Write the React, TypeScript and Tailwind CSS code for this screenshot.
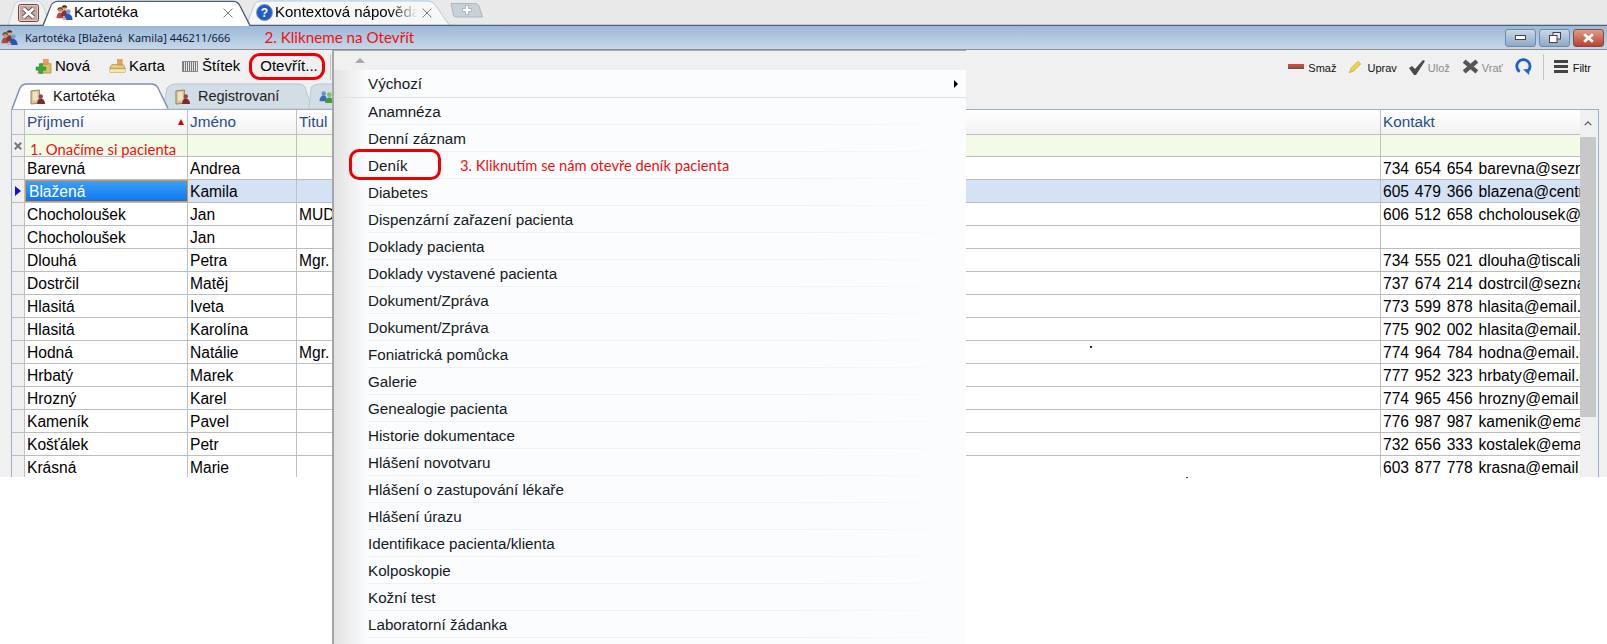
import React from 'react';

const rows = [
  ['Barevná', 'Andrea', '', '734 654 654 barevna@seznam.cz'],
  ['Blažená', 'Kamila', '', '605 479 366 blazena@centrum.cz'],
  ['Chocholoušek', 'Jan', 'MUDr.', '606 512 658 chcholousek@email.cz'],
  ['Chocholoušek', 'Jan', '', ''],
  ['Dlouhá', 'Petra', 'Mgr.', '734 555 021 dlouha@tiscali.cz'],
  ['Dostrčil', 'Matěj', '', '737 674 214 dostrcil@seznam.cz'],
  ['Hlasitá', 'Iveta', '', '773 599 878 hlasita@email.cz'],
  ['Hlasitá', 'Karolína', '', '775 902 002 hlasita@email.cz'],
  ['Hodná', 'Natálie', 'Mgr.', '774 964 784 hodna@email.cz'],
  ['Hrbatý', 'Marek', '', '777 952 323 hrbaty@email.cz'],
  ['Hrozný', 'Karel', '', '774 965 456 hrozny@email.cz'],
  ['Kameník', 'Pavel', '', '776 987 987 kamenik@email.cz'],
  ['Košťálek', 'Petr', '', '732 656 333 kostalek@email.cz'],
  ['Krásná', 'Marie', '', '603 877 778 krasna@email.cz'],
];

const menuItems = [
  'Anamnéza',
  'Denní záznam',
  'Deník',
  'Diabetes',
  'Dispenzární zařazení pacienta',
  'Doklady pacienta',
  'Doklady vystavené pacienta',
  'Dokument/Zpráva',
  'Dokument/Zpráva',
  'Foniatrická pomůcka',
  'Galerie',
  'Genealogie pacienta',
  'Historie dokumentace',
  'Hlášení novotvaru',
  'Hlášení o zastupování lékaře',
  'Hlášení úrazu',
  'Identifikace pacienta/klienta',
  'Kolposkopie',
  'Kožní test',
  'Laboratorní žádanka',
];

const People = ({ className }: { className?: string }) => (
  <svg viewBox="0 0 18 18" className={className}>
    <circle cx="4.500" cy="6" r="2.500" fill="#c98a5e" />
    <path d="M4.500 3.500c-2 0-3 1-3 3l1 0c0-1 1-1.500 2-1.500s2 .5 2 1.500h1c0-2-1-3-3-3z" fill="#6b3a24" />
    <path d="M0.500 15c0-4 1.500-6 4-6s3.500 2 3.500 6z" fill="#b04a42" />
    <circle cx="9" cy="3.800" r="2.500" fill="#d8a077" />
    <path d="M9 1.200c-2 0-3 1-3 2.500h6c0-1.500-1-2.500-3-2.500z" fill="#4a3020" />
    <path d="M5.500 13c0-4 1.200-6.500 3.500-6.500s3.500 2.500 3.500 6.500z" fill="#7a3a3a" />
    <circle cx="13" cy="8" r="2.500" fill="#7a9ad0" />
    <path d="M8.500 17c0-4 1.800-6.500 4.500-6.500s4.500 2.500 4.500 6.500z" fill="#2358b8" />
    <path d="M7 17c0-2 1-3 2-3s2 1 2 3z" fill="#e6a0b0" />
  </svg>
);

const TeamIcon = () => (
  <svg viewBox="0 0 16 16" className="relative w-[15px] h-[15px] mt-[6px]">
    <circle cx="5" cy="5" r="2.500" fill="#6f95c8" />
    <path d="M0.500 13c0-4 2-6 4.500-6s3.500 2 3.500 6z" fill="#3c6cb4" />
    <circle cx="11" cy="6" r="2.500" fill="#7fbf6a" />
    <path d="M6.500 15c0-4 2-6 4.500-6s4.500 2 4.500 6z" fill="#3f9a3a" />
  </svg>
);

const BookPerson = () => (
  <svg viewBox="0 0 17 17" className="w-[16px] h-[16px] shrink-0">
    <path d="M1 2l9-1v14l-9 1z" fill="#d8c59a" stroke="#7e6c4c" strokeWidth="0.800" />
    <path d="M3 3.500l5-.5v9l-5 .5z" fill="#efe2bd" />
    <circle cx="11.500" cy="8" r="2.300" fill="#8a4a48" />
    <path d="M7.500 16c0-3.500 1.500-6 4-6s4.500 2.500 4.500 6z" fill="#7c2c30" />
  </svg>
);

const NewIcon = () => (
  <svg viewBox="0 0 18 16" className="w-[17px] h-[15px] shrink-0">
    <path d="M6 5h11v10H3z" fill="#d8c06a" stroke="#96803a" strokeWidth="0.700" />
    <rect x="9" y="0.500" width="5" height="5" fill="#ef9a58" stroke="#c9803e" strokeWidth="0.500" />
    <path d="M4.500 5h3.500v3.500h3.500V12H8v3.500H4.500V12H1V8.500h3.500z" fill="#38a838" stroke="#1f7f2a" strokeWidth="0.500" />
  </svg>
);

const CardIcon = () => (
  <svg viewBox="0 0 18 16" className="w-[17px] h-[15px] shrink-0">
    <path d="M3 6h12l2 3v5H1V9z" fill="#e6d285" stroke="#96803a" strokeWidth="0.700" />
    <rect x="9" y="0.500" width="5" height="6" fill="#ef9a58" stroke="#c9803e" strokeWidth="0.500" />
    <path d="M1 10h16" stroke="#96803a" strokeWidth="0.700" />
    <path d="M1 11h16v3H1z" fill="#f3e6a8" />
  </svg>
);

const RedBox = () => (
  <svg viewBox="0 0 21 18" className="w-[21px] h-[18px] shrink-0">
    <rect x="0.500" y="0.500" width="20" height="17" rx="2" fill="#bda8a4" stroke="#8a3a36" />
    <rect x="1.500" y="1.500" width="18" height="15" rx="1" fill="none" stroke="#e6d8d6" strokeWidth="0.800" />
    <path d="M5.500 4.500l10 9M15.500 4.500l-10 9" stroke="#6e4a48" strokeWidth="4.500" />
    <path d="M5.500 4.500l10 9M15.500 4.500l-10 9" stroke="#fff" strokeWidth="3" />
  </svg>
);

const TabClose = () => (
  <svg viewBox="0 0 10 10" className="w-[10px] h-[10px] shrink-0">
    <path d="M0.500 0.500l9 9M9.500 0.500l-9 9" stroke="#808080" strokeWidth="1" fill="none" />
  </svg>
);

const ToolText = ({ children, gray }: { children: React.ReactNode; gray?: boolean }) => (
  <span className={`text-[11px] ${gray ? 'text-[#8a8a8a]' : 'text-[#111]'}`}>{children}</span>
);

const WindowButton = ({ children, close }: { children: React.ReactNode; close?: boolean }) => (
  <span
    className={`flex items-center justify-center w-[31px] h-[18px] rounded-[3px] border ${
      close ? 'border-[#8a4a44] bg-gradient-to-b from-[#e09a88] to-[#b8402e]' : 'border-[#6e8aa8] bg-gradient-to-b from-[#c8d8ea] to-[#8fa9c6]'
    }`}
  >
    {children}
  </span>
);

export default function App() {
  return (
    <div className="relative w-[1607px] h-[644px] overflow-hidden bg-white font-['Liberation_Sans',Arial,sans-serif]">
      {/* browser tab strip */}
      <div className="relative flex h-[26px] bg-[#e9e9e9]">
        <svg width="1607" height="26" className="absolute left-0 top-0">
          <path d="M8 26L14 6Q16 1 22 1H36Q41 1 44 8L50 26z" fill="#f1f1f1" stroke="#c5d3e2" />
          <path d="M451 3.500H475Q478 3.500 479 6L482.500 17H456Q454 17 453.500 15z" fill="#c8d0d8" stroke="#a9b6c4" />
          <path d="M246 26L254 6Q256 1 261 1H428Q433 1 436 6L450 26z" fill="#f7f7f7" stroke="#b6c9dc" />
          <path d="M0 25.500H43L51 6Q53 1.500 58 1.500H233Q238 1.500 240 6L250 25.500H1607" fill="none" stroke="#4e6178" strokeWidth="1.500" />
          <path d="M44 26L51.500 6Q53.500 2 58 2H233Q237 2 239 6L249 26z" fill="#fff" />
        </svg>
        <div className="relative flex items-center h-[25px] pl-[18px]">
          <RedBox />
        </div>
        <div className="relative flex items-center h-[25px] w-[204px] pl-[17px]">
          <People className="w-[17px] h-[17px] shrink-0" />
          <span className="ml-[1px] text-[15px] text-black">Kartotéka</span>
          <span className="ml-[85px]"><TabClose /></span>
        </div>
        <div className="relative flex items-center h-[25px] pl-[13px]">
          <span className="flex items-center justify-center w-[17px] h-[17px] shrink-0 rounded-full border border-[#8a9ab0] bg-[#1f5cc8] text-white text-[12px] font-bold">?</span>
          <span className="ml-[2px] w-[143px] overflow-hidden whitespace-nowrap text-[15px] text-black [mask-image:linear-gradient(90deg,#000_80%,transparent_100%)]">Kontextová nápověda</span>
          <span className="ml-[4px]"><TabClose /></span>
        </div>
        <svg viewBox="0 0 10 10" className="absolute left-[462px] top-[5px] w-[10px] h-[10px]">
          <path d="M3.500 0.500h3v3h3v3h-3v3h-3v-3h-3v-3h3z" fill="#fff" stroke="#8b97a4" strokeWidth="0.600" />
        </svg>
      </div>

      {/* window title */}
      <div className="flex items-center justify-between h-[24px] pr-[3px] bg-gradient-to-b from-[#9cb8d8] to-[#c6d8ea] border-b border-[#8f8f8f]">
        <div className="flex items-center">
          <People className="w-[17px] h-[17px] ml-[1px]" />
          <span className="ml-[7px] mt-[1px] text-[11px] text-[#10203a] font-['Noto_Sans',sans-serif] whitespace-nowrap">Kartotéka [Blažená&nbsp; Kamila] 446211/666</span>
          <span className="ml-[34px] text-[15.200px] text-[#f01010] font-['Lato',sans-serif] whitespace-nowrap">2. Klikneme na Otevřít</span>
        </div>
        <div className="flex items-center gap-[3px]">
          <WindowButton>
            <span className="w-[11px] h-[5px] border border-[#444] bg-white" />
          </WindowButton>
          <WindowButton>
            <svg viewBox="0 0 12 11" className="w-[12px] h-[11px]">
              <rect x="4" y="0.500" width="7.500" height="6.500" fill="#dfe8f2" stroke="#444" />
              <rect x="0.500" y="3.500" width="7.500" height="7" fill="#fff" stroke="#444" />
            </svg>
          </WindowButton>
          <WindowButton close>
            <svg viewBox="0 0 12 9" className="w-[13px] h-[10px]">
              <path d="M2 1l8 7M10 1L2 8" stroke="#fff" strokeWidth="2.600" />
            </svg>
          </WindowButton>
        </div>
      </div>

      {/* window body */}
      <div className="h-[427px] pr-[8px] bg-[#f0f0f0]">
        <div className="flex items-center justify-between h-[33px]">
          <div className="flex items-center pl-[35px] text-[15px] text-black">
            <NewIcon />
            <span className="ml-[3px]">Nová</span>
            <span className="ml-[19px]"><CardIcon /></span>
            <span className="ml-[3px]">Karta</span>
            <span className="ml-[17px] w-[16px] h-[11px] border border-[#8a8a8a] bg-[repeating-linear-gradient(90deg,#777_0,#777_1px,#e4e4e4_1px,#e4e4e4_2px)]" />
            <span className="ml-[4px]">Štítek</span>
            <span className="ml-[20px]">Otevřít...</span>
            <span className="ml-[12px] w-px h-[26px] bg-[#c4c4c4]" />
          </div>
          <div className="flex items-center">
            <span className="w-[16px] h-[5px] bg-gradient-to-b from-[#f03c30] to-[#555]" />
            <span className="ml-[4px]"><ToolText>Smaž</ToolText></span>
            <svg viewBox="0 0 16 16" className="ml-[12px] w-[14px] h-[14px]">
              <path d="M1.500 14.500l2-5 8-8 3 3-8 8z" fill="#f2d73c" stroke="#a89430" strokeWidth="0.700" />
            </svg>
            <span className="ml-[5px]"><ToolText>Uprav</ToolText></span>
            <svg viewBox="0 0 18 16" className="ml-[11px] w-[18px] h-[16px]">
              <path d="M1 9l3-2 3 3 8-9 2 1-9 14H6z" fill="#4a4a4a" />
            </svg>
            <span className="ml-[2px]"><ToolText gray>Ulož</ToolText></span>
            <svg viewBox="0 0 16 16" className="ml-[12px] w-[17px] h-[17px]">
              <path d="M2 3l12 10M14 3L2 13" stroke="#555" strokeWidth="4" />
            </svg>
            <span className="ml-[3px]"><ToolText gray>Vrať</ToolText></span>
            <svg viewBox="0 0 18 18" className="ml-[12px] w-[17px] h-[17px]">
              <path d="M5 14.500a7 7 0 1 1 8.500-.5" fill="none" stroke="#1f5fd0" strokeWidth="3" />
              <path d="M8.500 12h6.500v6z" fill="#1f5fd0" />
            </svg>
            <span className="ml-[11px] w-px h-[26px] bg-[#c4c4c4]" />
            <span className="ml-[10px] flex flex-col gap-[2px]">
              <span className="w-[14px] h-[3px] bg-[#444]" />
              <span className="w-[14px] h-[3px] bg-[#444]" />
              <span className="w-[14px] h-[3px] bg-[#444]" />
            </span>
            <span className="ml-[5px]"><ToolText>Filtr</ToolText></span>
            <span className="w-[8px]" />
          </div>
        </div>

        {/* inner tabs */}
        <div className="relative flex h-[26px] text-[14.500px]">
          <svg width="340" height="26" className="absolute left-0 top-0">
            <path d="M312 26L305 4Q303 1 299 1H175Q170 1 167 5L163 26z" fill="#d3dde6" stroke="#b8c7d6" />
            <path d="M340 1H318Q313 1 311 5L309 26H340z" fill="#d3dde6" stroke="#b8c7d6" />
            <path d="M12 26L20 5Q22 1 27 1H151Q156 1 158 5L168 25.500" fill="#fff" stroke="#7a93b0" strokeWidth="1.500" />
          </svg>
          <div className="relative flex items-center h-[26px] w-[170px] pl-[30px] pt-[2px] text-[#111]">
            <BookPerson />
            <span className="ml-[7px]">Kartotéka</span>
          </div>
          <div className="relative flex items-center h-[26px] w-[149px] pl-[5px] pt-[2px] text-[#222]">
            <BookPerson />
            <span className="ml-[7px]">Registrovaní</span>
          </div>
          <TeamIcon />
        </div>

        {/* grid */}
        <div className="flex ml-[11px] h-[368px] overflow-hidden bg-white border-l border-t border-r border-[#a0b0c4]">
          <div className="flex-1 min-w-0 text-[15.600px] text-black">
            <div className="flex h-[25px] border-b border-[#bdbdbd] bg-gradient-to-b from-white to-[#f2f2f2] text-[#2a4a8c] text-[15.300px]">
              <div className="w-[13px] bg-[#f0f0f0] border-r border-[#c0c0c0]" />
              <div className="relative flex items-center w-[163px] pl-[2px] border-r border-[#c0c0c0]">
                Příjmení
                <span className="absolute right-[3px] top-[9px] w-0 h-0 border-x-[3.500px] border-x-transparent border-b-[6px] border-b-[#e00000]" />
              </div>
              <div className="flex items-center w-[109px] pl-[2px] border-r border-[#c0c0c0]">Jméno</div>
              <div className="flex items-center w-[1084px] pl-[2px] border-r border-[#c0c0c0]">Titul</div>
              <div className="flex items-center flex-1 pl-[2px]">Kontakt</div>
            </div>
            <div className="flex h-[22px] border-b border-[#bdbdbd] bg-[#f1fbe5]">
              <div className="flex items-center justify-center w-[13px] bg-[#f0f0f0] border-r border-[#c0c0c0]">
                <svg viewBox="0 0 8 8" className="w-[8px] h-[8px]"><path d="M0.800 0.800l6.400 6.400M7.200 0.800L0.800 7.200" stroke="#777" strokeWidth="2" /></svg>
              </div>
              <div className="flex items-end w-[163px] pl-[5px] border-r border-[#c0c0c0] font-['Lato',sans-serif] text-[14.800px] leading-[14px] text-[#f01010] whitespace-nowrap">1. Onačíme si pacienta</div>
              <div className="w-[109px] border-r border-[#c0c0c0]" />
              <div className="w-[1084px] border-r border-[#c0c0c0]" />
            </div>
            {rows.map((row, i) => {
              const selected = i === 1;
              return (
                <div key={i} className={`flex h-[23px] border-b border-[#bdbdbd] ${selected ? 'bg-[#d5e2f6]' : 'bg-white'}`}>
                  <div className="flex items-center justify-center w-[13px] bg-[#f0f0f0] border-r border-[#c0c0c0]">
                    {selected && <span className="w-0 h-0 border-y-[5.500px] border-y-transparent border-l-[6px] border-l-[#1010e0]" />}
                  </div>
                  {selected ? (
                    <div className="flex items-center w-[163px] pl-[3px] pt-[1px] bg-gradient-to-b from-[#3aa0f8] to-[#0a78f0] border border-[#e8913a] text-white">{row[0]}</div>
                  ) : (
                    <div className="flex items-center w-[163px] pl-[2px] pt-[1px] border-r border-[#c0c0c0]">{row[0]}</div>
                  )}
                  <div className="flex items-center w-[109px] pl-[2px] pt-[1px] border-r border-[#c0c0c0]">{row[1]}</div>
                  <div className="flex items-center w-[1084px] pl-[2px] pt-[1px] border-r border-[#c0c0c0]">{row[2]}</div>
                  <div className="flex items-center flex-1 min-w-0 pl-[2px] pt-[1px] overflow-hidden whitespace-nowrap [word-spacing:1.500px]">{row[3]}</div>
                </div>
              );
            })}
          </div>
          {/* scrollbar */}
          <div className="flex flex-col w-[18px] pr-[2px] bg-[#f0f0f0]">
            <div className="flex items-center justify-center h-[27px]">
              <svg viewBox="0 0 10 6" className="w-[8px] h-[5px]"><path d="M1 5l4-4 4 4" fill="none" stroke="#555" strokeWidth="1.600" /></svg>
            </div>
            <div className="h-[280px] bg-[#c8c8c8]" />
          </div>
        </div>
      </div>

      {/* opened drop-down menu */}
      <div className="absolute left-[332px] top-[50px] bottom-0 w-[634px] border-l-2 border-t border-[#a6a6a6] bg-[#fbfcfe]">
        <div className="relative h-[19px] bg-[#f0f0f0]">
          <span className="absolute left-[21px] top-[7px] w-0 h-0 border-x-[5px] border-x-transparent border-b-[5px] border-b-[#a8a8a8]" />
        </div>
        <div className="flex h-full">
          <div className="w-[33px] shrink-0 bg-gradient-to-r from-[#e2e2e2] to-[#fbfcfe]" />
          <div className="flex-1 text-[15.200px] text-[#141a22]">
            <div className="relative flex items-center h-[28px] pl-[1px]">
              Výchozí
              <span className="absolute right-[8px] top-[10px] w-0 h-0 border-y-[4px] border-y-transparent border-l-[4px] border-l-black" />
            </div>
            {menuItems.map((item, i) => (
              <div
                key={i}
                className="flex items-center h-[27px] pl-[1px] pt-[1px] bg-[linear-gradient(90deg,#eef0f3,#eef0f3_70%,transparent)] bg-no-repeat bg-bottom bg-[length:100%_1px]"
              >
                <span className="w-full">{item}</span>
              </div>
            ))}
          </div>
        </div>
        <div className="absolute left-[3px] right-0 top-[46px] h-px bg-[#dfe1e4]" />
      </div>

      {/* annotations */}
      <span className="absolute left-[349px] top-[149px] w-[92px] h-[31px] rounded-[10px] border-[3px] border-[#ee0000]" />
      <span className="absolute left-[460px] top-[154px] text-[14.700px] text-[#f01010] font-['Lato',sans-serif] whitespace-nowrap">3. Kliknutím se nám otevře deník pacienta</span>
      <span className="absolute left-[249px] top-[53px] w-[76px] h-[27px] rounded-[11px] border-[3px] border-[#ee0000]" />
      <span className="absolute left-[1090px] top-[346px] w-[2px] h-[2px] bg-[#222]" />
      <span className="absolute left-[1186px] top-[477px] w-[2px] h-px bg-[#444]" />
    </div>
  );
}
